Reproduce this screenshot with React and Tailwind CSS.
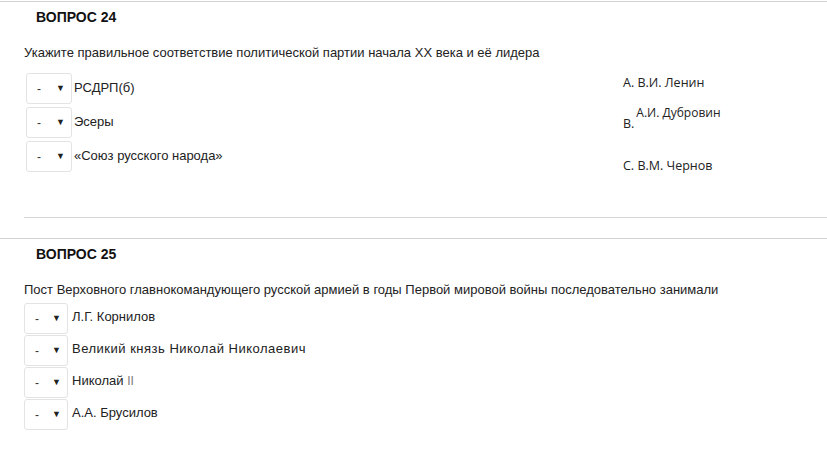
import React from "react";

function Sel({ w }) {
  return (
    <div
      className={`${w} h-[31px] shrink-0 rounded-[3px] border border-[#e3e3e3] bg-white flex items-center justify-between pl-[10px] pr-[6px] text-[12px] text-[#333]`}
    >
      <span className="leading-none">-</span>
      <span className="text-[9px] leading-none text-[#222]">▼</span>
    </div>
  );
}

export default function App() {
  const q24 = ["РСДРП(б)", "Эсеры", "«Союз русского народа»"];
  const q25 = [
    { t: "Л.Г. Корнилов", c: "" },
    { t: "Великий князь Николай Николаевич", c: "tracking-[0.5px]" },
    { t: "Николай II", c: "" },
    { t: "А.А. Брусилов", c: "" },
  ];
  return (
    <div className="w-[827px] h-[450px] bg-white font-['Liberation_Sans',Arial,sans-serif] text-[#222]">
      <div className="mt-px border-t border-[#d2d2d2]" />
      {/* Question 24 */}
      <div className="pl-[24px]">
        <div className="pt-[7px] pl-[12px] text-[14px] leading-[16px] font-bold text-[#111]">
          ВОПРОС 24
        </div>
        <div className="mt-[20px] text-[13px] leading-[16px]">
          Укажите правильное соответствие политической партии начала XX века и её лидера
        </div>
        <div className="mt-[12px] flex border-b border-[#d6d6d6] pb-[43px]">
          <div className="w-[599px] flex flex-col gap-[3px] pl-[2px]">
            {q24.map((t) => (
              <div key={t} className="flex items-center h-[31px]">
                <Sel w="w-[46px]" />
                <span className="ml-[2px] text-[13px] leading-[16px] -mt-[2px]">{t}</span>
              </div>
            ))}
          </div>
          <div className="flex flex-col font-['Open_Sans',sans-serif] text-[12.5px] leading-[16px] text-[#222]">
            <div className="mt-[2px]">A. В.И. Ленин</div>
            <div className="mt-[14px] flex">
              <span className="mt-[11px]">B.</span>
              <span className="ml-[2px] text-[12px]">А.И. Дубровин</span>
            </div>
            <div className="mt-[26px]">C. В.М. Чернов</div>
          </div>
        </div>
      </div>
      <div className="mt-[20px] border-t border-[#d2d2d2]" />
      {/* Question 25 */}
      <div className="pl-[24px]">
        <div className="pt-[7px] pl-[12px] text-[14px] leading-[16px] font-bold text-[#111]">
          ВОПРОС 25
        </div>
        <div className="mt-[20px] text-[13px] leading-[16px]">
          Пост Верховного главнокомандующего русской армией в годы Первой мировой войны последовательно занимали
        </div>
        <div className="mt-[5px] flex flex-col gap-[1px]">
          {q25.map(({ t, c }) => (
            <div key={t} className="flex items-center h-[31px]">
              <Sel w="w-[44px]" />
              <span className={`ml-[4px] text-[13px] leading-[16px] -mt-[3px] ${c}`}>
                {t === "Николай II" ? (
                  <>
                    Николай <span className="text-[#777] text-[12px]">II</span>
                  </>
                ) : (
                  t
                )}
              </span>
            </div>
          ))}
        </div>
      </div>
    </div>
  );
}
